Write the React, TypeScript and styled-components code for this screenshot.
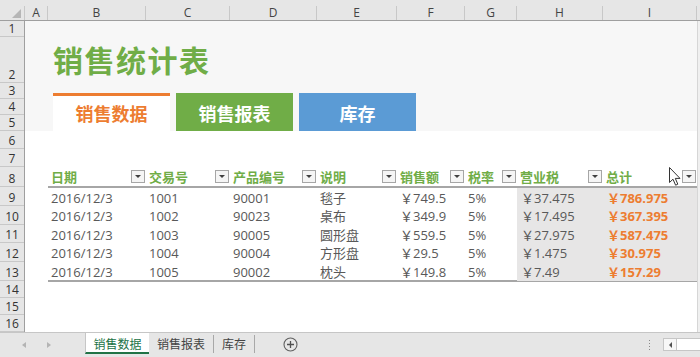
import React from "react";
import styled, { createGlobalStyle } from "styled-components";

const GlobalStyle = createGlobalStyle`
  html, body {
    margin: 0;
    padding: 0;
    width: 700px;
    height: 357px;
    overflow: hidden;
    background: #ffffff;
  }
  body {
    font-family: "Open Sans", "Noto Sans CJK SC", sans-serif;
  }
  * { box-sizing: border-box; }
`;

const CJK = `"Noto Sans CJK SC", "Open Sans", sans-serif`;
const NUM = `"Open Sans", "Noto Sans CJK SC", sans-serif`;

const Window = styled.div`
  width: 700px;
  height: 357px;
  display: flex;
  flex-direction: column;
  background: #ffffff;
  overflow: hidden;
`;

/* ---------- column header ---------- */
const ColHeaderBar = styled.div`
  height: 21px;
  display: flex;
  background: #e6e6e6;
  border-bottom: 1px solid #9f9f9f;
  flex-shrink: 0;
`;

const Corner = styled.div`
  width: 25px;
  position: relative;
  border-right: 1px solid #c8c8c8;
  margin-top: 6px;
  &::after {
    content: "";
    position: absolute;
    right: 3px;
    bottom: 2px;
    width: 0;
    height: 0;
    border-left: 9px solid transparent;
    border-bottom: 9px solid #b6b6b6;
  }
`;

const ColHead = styled.div<{ $w: number }>`
  width: ${(p) => p.$w}px;
  margin-top: 6px;
  border-right: 1px solid #c8c8c8;
  display: flex;
  align-items: center;
  justify-content: center;
  font-family: ${NUM};
  font-size: 12px;
  color: #444444;
  line-height: 14px;
`;

const ColFiller = styled.div`
  flex: 1;
`;

/* ---------- body ---------- */
const Body = styled.div`
  height: 311px;
  display: flex;
  flex-shrink: 0;
`;

const RowHeads = styled.div`
  width: 25px;
  display: flex;
  flex-direction: column;
  background: #e6e6e6;
  border-right: 1px solid #9f9f9f;
`;

const RowHead = styled.div<{ $h: number }>`
  height: ${(p) => p.$h}px;
  border-bottom: 1px solid #c8c8c8;
  display: flex;
  align-items: flex-end;
  justify-content: center;
  font-family: ${NUM};
  font-size: 12px;
  line-height: 15px;
  color: #333333;
`;

const Canvas = styled.div`
  width: 672px;
  position: relative;
  display: flex;
  flex-direction: column;
  background: #ffffff;
`;

const VEdge = styled.div`
  flex: 1;
  background: #f0f0f0;
  border-left: 1px solid #d6d6d6;
`;

const Banner = styled.div`
  height: 110px;
  background: #f7f7f7;
  display: flex;
  flex-direction: column;
  padding: 23px 0 0 28px;
`;

const Title = styled.h1`
  margin: 0;
  height: 31px;
  font-family: ${CJK};
  font-weight: 700;
  font-size: 30px;
  line-height: 31px;
  color: #70ad47;
  letter-spacing: 1.5px;
`;

const Tabs = styled.div`
  margin-top: 18px;
  display: flex;
  gap: 6px;
  height: 38px;
`;

const Tab = styled.div<{ $bg: string; $fg: string; $top?: string }>`
  width: 117px;
  height: 38px;
  background: ${(p) => p.$bg};
  border-top: 3px solid ${(p) => p.$top ?? p.$bg};
  display: flex;
  align-items: center;
  justify-content: center;
  font-family: ${CJK};
  font-weight: 700;
  font-size: 18px;
  color: ${(p) => p.$fg};
  padding-bottom: 2px;
`;

const TableArea = styled.div`
  padding: 36px 0 0 23px;
`;

const GRID = "98px 84px 87px 80px 68px 52px 86px 94px";

const Table = styled.div`
  width: 649px;
  display: flex;
  flex-direction: column;
  border-bottom: 2px solid #a6a6a6;
`;

const HeadRow = styled.div`
  display: grid;
  grid-template-columns: ${GRID};
  height: 21px;
  border-bottom: 2px solid #a6a6a6;
`;

const HeadCell = styled.div`
  display: flex;
  align-items: center;
  justify-content: space-between;
  padding: 0 1px 0 3px;
  font-family: ${CJK};
  font-size: 13px;
  font-weight: 700;
  color: #70ad47;
`;

const FilterBtn = styled.span`
  width: 14px;
  height: 13px;
  border: 1px solid #a6a6a6;
  background: #f5f5f5;
  display: flex;
  align-items: center;
  justify-content: center;
  flex-shrink: 0;
  &::after {
    content: "";
    width: 0;
    height: 0;
    border-left: 3px solid transparent;
    border-right: 3px solid transparent;
    border-top: 3px solid #404040;
  }
`;

const DataRow = styled.div<{ $h: number }>`
  display: grid;
  grid-template-columns: ${GRID};
  height: ${(p) => p.$h}px;
`;

const Cell = styled.div<{ $shade?: boolean; $accent?: boolean }>`
  display: flex;
  align-items: center;
  padding-left: ${(p) => (p.$shade ? 4 : 3)}px;
  background: ${(p) => (p.$shade ? "#e7e6e6" : "transparent")};
  font-family: ${NUM};
  font-size: 13px;
  font-weight: ${(p) => (p.$accent ? 700 : 400)};
  color: ${(p) => (p.$accent ? "#ed7d31" : "#595959")};
  white-space: nowrap;
`;

const Cursor = styled.svg`
  position: absolute;
  left: 644px;
  top: 146px;
  width: 12px;
  height: 19px;
`;

/* ---------- sheet bar ---------- */
const SheetBar = styled.div`
  height: 25px;
  display: flex;
  align-items: stretch;
  background: #e6e6e6;
  border-top: 1px solid #c6c6c6;
  flex-shrink: 0;
`;

const NavArea = styled.div`
  width: 85px;
  display: flex;
  align-items: center;
  padding-left: 22px;
  gap: 21px;
`;

const NavArrow = styled.span<{ $dir: "l" | "r" }>`
  width: 0;
  height: 0;
  border-top: 3px solid transparent;
  border-bottom: 3px solid transparent;
  ${(p) =>
    p.$dir === "l"
      ? "border-right: 4px solid #b4b4b4;"
      : "border-left: 4px solid #b4b4b4;"}
`;

const SheetTab = styled.div<{ $w: number; $active?: boolean }>`
  width: ${(p) => p.$w}px;
  height: 21px;
  display: flex;
  align-items: center;
  justify-content: center;
  font-family: ${CJK};
  font-size: 12px;
  color: ${(p) => (p.$active ? "#217346" : "#444444")};
  background: ${(p) => (p.$active ? "#ffffff" : "transparent")};
  border-bottom: 2px solid ${(p) => (p.$active ? "#217346" : "transparent")};
  border-left: ${(p) => (p.$active ? "1px solid #c6c6c6" : "none")};
  padding-top: 1px;
`;

const TabSep = styled.span`
  width: 1px;
  height: 18px;
  margin-top: 2px;
  background: #a8a8a8;
`;

const AddSheet = styled.svg`
  margin: 4px 0 0 28px;
  width: 15px;
  height: 15px;
`;

const BarSpacer = styled.div`
  flex: 1;
`;

const Grip = styled.div`
  width: 1px;
  margin: 7px 13px 0 0;
  height: 11px;
  background-image: linear-gradient(#8a8a8a 50%, transparent 50%);
  background-size: 1px 3px;
`;

const HScroll = styled.div`
  width: 37px;
  height: 13px;
  margin-top: 5px;
  display: flex;
  background: #ffffff;
  border: 1px solid #c6c6c6;
  border-right: none;
`;

const HScrollBtn = styled.div`
  width: 13px;
  height: 100%;
  border-right: 1px solid #c6c6c6;
  background: #f7f7f7;
  display: flex;
  align-items: center;
  justify-content: center;
  &::after {
    content: "";
    width: 0;
    height: 0;
    border-top: 3px solid transparent;
    border-bottom: 3px solid transparent;
    border-right: 3px solid #505050;
  }
`;

const columns = [
  { label: "A", w: 23 },
  { label: "B", w: 98 },
  { label: "C", w: 84 },
  { label: "D", w: 87 },
  { label: "E", w: 80 },
  { label: "F", w: 68 },
  { label: "G", w: 52 },
  { label: "H", w: 86 },
  { label: "I", w: 94 },
];

const rowHeights = [16, 46, 16, 16, 16, 18, 18, 20, 19, 19, 18, 19, 19, 17, 17, 17];

const headers = ["日期", "交易号", "产品编号", "说明", "销售额", "税率", "营业税", "总计"];

const data = [
  ["2016/12/3", "1001", "90001", "毯子", "￥749.5", "5%", "￥37.475", "￥786.975"],
  ["2016/12/3", "1002", "90023", "桌布", "￥349.9", "5%", "￥17.495", "￥367.395"],
  ["2016/12/3", "1003", "90005", "圆形盘", "￥559.5", "5%", "￥27.975", "￥587.475"],
  ["2016/12/3", "1004", "90004", "方形盘", "￥29.5", "5%", "￥1.475", "￥30.975"],
  ["2016/12/3", "1005", "90002", "枕头", "￥149.8", "5%", "￥7.49", "￥157.29"],
];

const dataHeights = [18, 19, 18, 19, 18];

export default function App() {
  return (
    <>
      <GlobalStyle />
      <Window>
        <ColHeaderBar>
          <Corner />
          {columns.map((c) => (
            <ColHead key={c.label} $w={c.w}>
              {c.label}
            </ColHead>
          ))}
          <ColFiller />
        </ColHeaderBar>

        <Body>
          <RowHeads>
            {rowHeights.map((h, i) => (
              <RowHead key={i} $h={h}>
                {i + 1}
              </RowHead>
            ))}
          </RowHeads>

          <Canvas>
            <Banner>
              <Title>销售统计表</Title>
              <Tabs>
                <Tab $bg="#ffffff" $fg="#ed7d31" $top="#ed7d31">
                  销售数据
                </Tab>
                <Tab $bg="#70ad47" $fg="#ffffff">
                  销售报表
                </Tab>
                <Tab $bg="#5b9bd5" $fg="#ffffff">
                  库存
                </Tab>
              </Tabs>
            </Banner>

            <TableArea>
              <Table>
                <HeadRow>
                  {headers.map((h) => (
                    <HeadCell key={h}>
                      <span>{h}</span>
                      <FilterBtn />
                    </HeadCell>
                  ))}
                </HeadRow>
                {data.map((row, ri) => (
                  <DataRow key={ri} $h={dataHeights[ri]}>
                    {row.map((v, ci) => (
                      <Cell key={ci} $shade={ci >= 6} $accent={ci === 7}>
                        {v}
                      </Cell>
                    ))}
                  </DataRow>
                ))}
              </Table>
            </TableArea>

            <Cursor viewBox="0 0 12 19">
              <path
                d="M0.5 0.5 L0.5 15.5 L4 12.2 L6.6 18.2 L8.8 17.2 L6.3 11.4 L11 11.4 Z"
                fill="#ffffff"
                stroke="#333333"
                strokeWidth="1"
                strokeLinejoin="round"
              />
            </Cursor>
          </Canvas>
          <VEdge />
        </Body>

        <SheetBar>
          <NavArea>
            <NavArrow $dir="l" />
            <NavArrow $dir="r" />
          </NavArea>
          <SheetTab $w={64} $active>
            销售数据
          </SheetTab>
          <SheetTab $w={64}>销售报表</SheetTab>
          <TabSep />
          <SheetTab $w={40}>库存</SheetTab>
          <TabSep />
          <AddSheet viewBox="0 0 15 15">
            <circle cx="7.5" cy="7.5" r="6.5" fill="none" stroke="#606060" strokeWidth="1.1" />
            <path d="M7.5 4 V11 M4 7.5 H11" stroke="#505050" strokeWidth="1.3" />
          </AddSheet>
          <BarSpacer />
          <Grip />
          <HScroll>
            <HScrollBtn />
          </HScroll>
        </SheetBar>
      </Window>
    </>
  );
}
